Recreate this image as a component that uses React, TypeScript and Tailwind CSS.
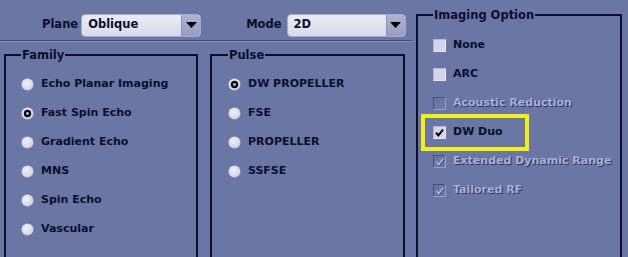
import React from "react"

const ink = "text-[#0b0e2c]"

function Radio({ on }: { on?: boolean }) {
  return (
    <svg width="13" height="13" viewBox="0 0 13 13" className="shrink-0">
      <defs>
        <radialGradient id="rg" cx="42%" cy="38%" r="70%">
          <stop offset="0" stopColor="#eef0f8" />
          <stop offset="0.7" stopColor="#d6d9e8" />
          <stop offset="1" stopColor="#b4b9d2" />
        </radialGradient>
      </defs>
      <circle cx="6.5" cy="6.5" r="6" fill="url(#rg)" />
      {on && (
        <>
          <circle cx="6.5" cy="6.5" r="3.7" fill="#0a0a12" />
          <circle cx="6.5" cy="6.5" r="1.4" fill="#b9bdcf" />
        </>
      )}
    </svg>
  )
}

function Check({ checked, disabled }: { checked?: boolean; disabled?: boolean }) {
  if (disabled) {
    return (
      <span className="w-[13px] h-[13px] shrink-0 border border-t-[#46507c] border-l-[#46507c] border-b-[#98a0c6] border-r-[#98a0c6] flex items-center justify-center">
        {checked && (
          <svg width="11" height="11" viewBox="0 0 11 11">
            <path d="M2.5 6 L4.8 8.5 L9.2 2.8" stroke="#3a4370" strokeWidth="2" fill="none" transform="translate(0.6 0.6)" />
            <path d="M2.5 6 L4.8 8.5 L9.2 2.8" stroke="#aeb5d6" strokeWidth="1.8" fill="none" />
          </svg>
        )}
      </span>
    )
  }
  return (
    <span className="w-[13px] h-[13px] shrink-0 bg-[#d3d6e6] border border-t-[#b3b8d2] border-l-[#b3b8d2] border-b-[#e6e8f2] border-r-[#e6e8f2] flex items-center justify-center">
      {checked && (
        <svg width="11" height="11" viewBox="0 0 11 11">
          <path d="M2 5.8 L4.4 8.4 L9 2.6" stroke="#000" strokeWidth="2" fill="none" />
        </svg>
      )}
    </span>
  )
}

function Dropdown({ value, width }: { value: string; width: string }) {
  return (
    <div className={`flex h-[23px] ${width} rounded-[4px] overflow-hidden border border-[#a4abcb] bg-gradient-to-b from-[#e9ebf5] to-[#d8dbeb]`}>
      <span className={`flex-1 flex items-center pl-[6px] font-bold text-[11.5px] ${ink}`}>{value}</span>
      <span className="w-[19px] flex items-center justify-center bg-gradient-to-b from-[#aeb4d0] to-[#969dbf] border-l border-[#8c93b7]">
        <svg width="11" height="6" viewBox="0 0 11 6">
          <path d="M0 0 H11 L5.5 6 Z" fill="#000" />
        </svg>
      </span>
    </div>
  )
}

function Group({ title, className, children }: { title: string; className: string; children: React.ReactNode }) {
  return (
    <fieldset className={`shrink-0 border-2 border-[#0b0e2c] ${className}`}>
      <legend className={`px-[1px] leading-[14px] font-bold text-[11.5px] ${ink}`}>{title}</legend>
      {children}
    </fieldset>
  )
}

function RadioRow({ label, on }: { label: string; on?: boolean }) {
  return (
    <div className="flex items-center gap-[7px] h-[29px]">
      <Radio on={on} />
      <span className={`font-bold text-[11px] ${ink}`}>{label}</span>
    </div>
  )
}

function CheckRow({ label, checked, disabled }: { label: string; checked?: boolean; disabled?: boolean }) {
  return (
    <div className="flex items-center gap-[7px] h-[29px]">
      <Check checked={checked} disabled={disabled} />
      <span
        className={
          disabled
            ? "font-bold text-[11px] text-[#a9b0d3] [text-shadow:1px_1px_0_#2c345e]"
            : `font-bold text-[11px] ${ink}`
        }
      >
        {label}
      </span>
    </div>
  )
}

export default function App() {
  const family = ["Echo Planar Imaging", "Fast Spin Echo", "Gradient Echo", "MNS", "Spin Echo", "Vascular"]
  const pulse = ["DW PROPELLER", "FSE", "PROPELLER", "SSFSE"]

  return (
    <div className="w-[628px] h-[257px] overflow-hidden bg-[#6a76a3] flex items-start font-['DejaVu_Sans',sans-serif]">
      <div className="w-[412px] shrink-0 flex flex-col">
        <div className="h-[40px] shrink-0 pt-[10px] flex items-center">
          <span className={`ml-[42px] font-bold text-[11.5px] ${ink}`}>Plane</span>
          <div className="ml-[3px]">
            <Dropdown value="Oblique" width="w-[120px]" />
          </div>
          <span className={`ml-[45px] font-bold text-[11.5px] ${ink}`}>Mode</span>
          <div className="ml-[5px]">
            <Dropdown value="2D" width="w-[119px]" />
          </div>
        </div>
        <div className="h-px shrink-0 bg-[#414a78]" />
        <div className="h-px shrink-0 bg-[#8891bb]" />
        <div className="flex shrink-0 mt-[6px]">
          <Group title="Family" className="ml-[4px] w-[194px] h-[230px] pl-[15px] pt-[8px]">
            {family.map((f, i) => (
              <RadioRow key={f} label={f} on={i === 1} />
            ))}
          </Group>
          <Group title="Pulse" className="ml-[12px] w-[195px] h-[230px] pl-[16px] pt-[8px]">
            {pulse.map((p, i) => (
              <RadioRow key={p} label={p} on={i === 0} />
            ))}
          </Group>
        </div>
      </div>
      <div className="flex-1">
        <Group title="Imaging Option" className="ml-[4px] mt-[8px] w-[206px] h-[260px] pl-[15px] pt-[9px]">
          <CheckRow label="None" />
          <CheckRow label="ARC" />
          <CheckRow label="Acoustic Reduction" disabled />
          <div className="relative">
            <CheckRow label="DW Duo" checked />
            <span className="absolute left-[-12px] top-[-4px] w-[108px] h-[37px] border-4 border-[#f4ef14]" />
          </div>
          <CheckRow label="Extended Dynamic Range" checked disabled />
          <CheckRow label="Tailored RF" checked disabled />
        </Group>
      </div>
    </div>
  )
}
